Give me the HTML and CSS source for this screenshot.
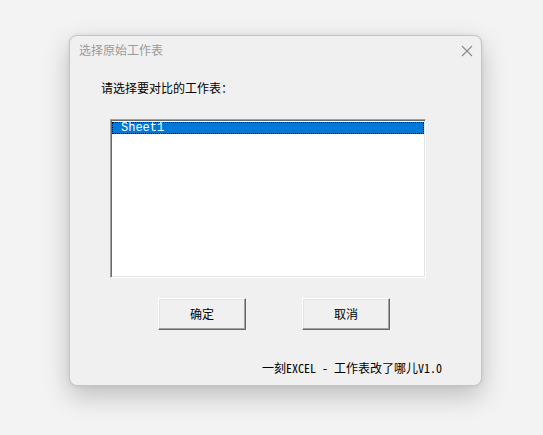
FILE: index.html
```html
<!DOCTYPE html>
<html lang="zh-CN">
<head>
<meta charset="utf-8">
<title>选择原始工作表</title>
<link rel="stylesheet" href="styles.css">
</head>
<body>
<div class="window">
  <div class="titlebar">
    <span class="title">选择原始工作表</span>
    <svg class="close" width="12" height="12" viewBox="0 0 12 12" aria-hidden="true">
      <path d="M1 1 L11 11 M11 1 L1 11" stroke="#8a8a8a" stroke-width="1.1" fill="none"/>
    </svg>
  </div>
  <div class="label">请选择要对比的工作表：</div>
  <div class="listbox">
    <div class="item selected">Sheet1</div>
  </div>
  <div class="buttons">
    <div class="btn">确定</div>
    <div class="btn">取消</div>
  </div>
  <div class="footer">一刻EXCEL - 工作表改了哪儿V1.0</div>
</div>
</body>
</html>
```
FILE: styles.css
```css
html, body {
  margin: 0;
  padding: 0;
  background: #f3f3f3;
  width: 543px;
  height: 435px;
  overflow: hidden;
}
body {
  padding: 35px 0 0 69px;
  box-sizing: border-box;
  font-family: "Noto Sans Mono CJK SC", "Noto Sans CJK SC", "DejaVu Sans Mono", monospace;
  font-size: 12px;
  color: #000;
}
.window {
  width: 413px;
  height: 351px;
  box-sizing: border-box;
  background: #f0f0f0;
  border: 1px solid #c4c4c4;
  border-radius: 8px;
  box-shadow: 0 10px 26px rgba(0, 0, 0, 0.22), 0 0 4px rgba(0, 0, 0, 0.08);
  display: flex;
  flex-direction: column;
}
.titlebar {
  height: 25px;
  display: flex;
  align-items: center;
  justify-content: space-between;
  padding: 1px 8px 0 9px;
}
.title {
  font-family: "Noto Sans CJK SC", sans-serif;
  font-size: 12px;
  color: #9a9a9a;
  line-height: 14px;
}
.close {
  display: block;
  margin-top: 2px;
}
.label {
  margin: 19px 0 0 31px;
  line-height: 14px;
}
.listbox {
  margin: 24px 0 0 40px;
  width: 316px;
  height: 159px;
  box-sizing: border-box;
  background: #fff;
  border: 1px solid;
  border-color: #a0a0a0 #fff #fff #a0a0a0;
  box-shadow: inset 1px 1px 0 #696969, inset -1px -1px 0 #e3e3e3;
  padding: 2px 1px 1px 1px;
}
.item {
  height: 10px;
  line-height: 10px;
  padding-left: 8px;
  font-family: "Liberation Mono", "DejaVu Sans Mono", monospace;
  font-size: 12px;
}
.selected {
  background: #0078d7;
  color: #fff;
  border: 1px dotted #000;
}
.buttons {
  margin-top: 20px;
  padding-left: 88px;
  display: flex;
  gap: 56px;
}
.btn {
  width: 88px;
  height: 32px;
  box-sizing: border-box;
  border: 1px solid;
  border-color: #fff #696969 #696969 #fff;
  box-shadow: inset -1px -1px 0 #a0a0a0, inset 1px 1px 0 #e3e3e3;
  background: #f0f0f0;
  display: flex;
  align-items: center;
  justify-content: center;
  line-height: 14px;
}
.footer {
  margin: 31px 0 0 192px;
  line-height: 14px;
  white-space: nowrap;
}
```
